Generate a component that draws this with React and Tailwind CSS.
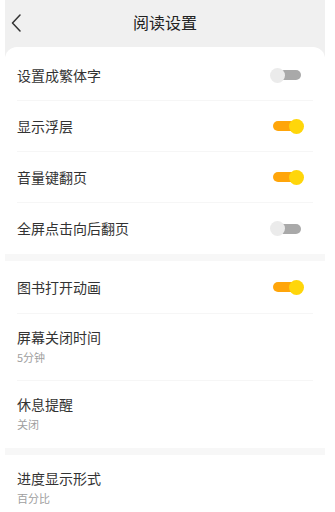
import React from "react";

const font = { fontFamily: '"Noto Sans CJK SC", "Noto Sans", sans-serif' };

const Toggle = ({ on }) => (
  <div className="relative w-[34px] h-[16px] flex items-center">
    {on ? (
      <>
        <div className="absolute left-[3px] w-[23px] h-[10px] rounded-full bg-[#ffa50a]" />
        <div className="absolute right-0 w-[15px] h-[15px] rounded-full bg-[#ffd60a]" />
      </>
    ) : (
      <>
        <div className="absolute left-[8px] w-[23px] h-[10px] rounded-full bg-[#a9a9a9]" />
        <div className="absolute left-0 w-[15px] h-[15px] rounded-full bg-[#ebebeb]" />
      </>
    )}
  </div>
);

const Divider = () => <div className="mx-3 h-px bg-[#f6f6f6]" />;

const Band = () => <div className="h-[7px] bg-[#f7f7f7]" />;

const SwitchRow = ({ label, on, height = "h-[50px]" }) => (
  <div className={`${height} flex items-center justify-between pl-3 pr-[21px]`}>
    <span className="text-[14px] text-[#333]">{label}</span>
    <Toggle on={on} />
  </div>
);

const ValueRow = ({ label, value, height = "h-[66px]" }) => (
  <div className={`${height} flex flex-col pt-[13px] pl-3`}>
    <span className="text-[14px] leading-[20px] text-[#333]">{label}</span>
    <span className="text-[11px] leading-[16px] mt-[2px] text-[#a0a0a0]">{value}</span>
  </div>
);

export default function App() {
  return (
    <div className="w-[335px] h-[512px] bg-white overflow-hidden" style={font}>
      <div className="ml-[5px] w-[320px] bg-[#f0f0f0]">
        <div className="relative h-[47px] flex justify-center pt-[10px]">
          <svg
            className="absolute left-[5px] top-[14px]"
            width="12"
            height="18"
            viewBox="0 0 12 18"
            fill="none"
          >
            <path d="M10 1 L2.5 9 L10 17" stroke="#333" strokeWidth="1.5" strokeLinecap="round" strokeLinejoin="round" />
          </svg>
          <span className="text-[16px] leading-[24px] text-[#222]">阅读设置</span>
        </div>
        <div className="bg-white rounded-t-[12px] pt-[3px]">
          <SwitchRow label="设置成繁体字" on={false} />
          <Divider />
          <SwitchRow label="显示浮层" on />
          <Divider />
          <SwitchRow label="音量键翻页" on />
          <Divider />
          <SwitchRow label="全屏点击向后翻页" on={false} height="h-[51px]" />
          <Band />
          <SwitchRow label="图书打开动画" on height="h-[52px]" />
          <Divider />
          <ValueRow label="屏幕关闭时间" value="5分钟" />
          <Divider />
          <ValueRow label="休息提醒" value="关闭" height="h-[67px]" />
          <Band />
          <ValueRow label="进度显示形式" value="百分比" height="h-[70px]" />
        </div>
      </div>
    </div>
  );
}
